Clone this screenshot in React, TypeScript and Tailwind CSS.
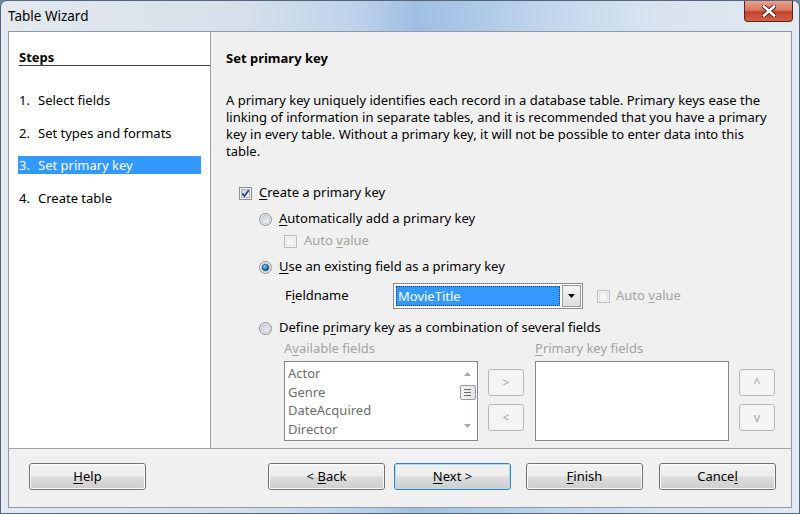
import React from "react";

function CheckBox({ checked = false, disabled = false }: { checked?: boolean; disabled?: boolean }) {
  return (
    <svg width="13" height="13" viewBox="0 0 13 13" className="shrink-0">
      <defs>
        <linearGradient id="cbin" x1="0" y1="0" x2="1" y2="1">
          <stop offset="0" stopColor="#c9ced6" />
          <stop offset="1" stopColor="#f8f8f8" />
        </linearGradient>
      </defs>
      {disabled ? (
        <>
          <rect x="0.5" y="0.5" width="12" height="12" fill="#f6f6f6" stroke="#bcbcbc" />
          <rect x="2.5" y="2.5" width="8" height="8" fill="#f4f4f4" stroke="#e2e2e2" />
        </>
      ) : (
        <>
          <rect x="0.5" y="0.5" width="12" height="12" fill="#f4f4f4" stroke="#8e8f8f" />
          <rect x="2.5" y="2.5" width="8" height="8" fill="url(#cbin)" stroke="#b2b6bc" />
        </>
      )}
      {checked && <path d="M3.2 6.4 L5.4 9 L9.8 3.2" stroke="#2c4a86" strokeWidth="1.8" fill="none" />}
    </svg>
  );
}

function Radio({ checked = false }: { checked?: boolean }) {
  return (
    <svg width="13" height="13" viewBox="0 0 13 13" className="shrink-0">
      <defs>
        <linearGradient id="rbout" x1="0" y1="0" x2="1" y2="1">
          <stop offset="0" stopColor="#f4f4f4" />
          <stop offset="1" stopColor="#e0e0e0" />
        </linearGradient>
        <linearGradient id="rbin" x1="0" y1="0" x2="1" y2="1">
          <stop offset="0" stopColor="#c6cbd2" />
          <stop offset="1" stopColor="#f6f6f6" />
        </linearGradient>
        <radialGradient id="rdot" cx="0.4" cy="0.35" r="0.7">
          <stop offset="0" stopColor="#8fdcff" />
          <stop offset="0.45" stopColor="#2a8cc4" />
          <stop offset="1" stopColor="#0c3b60" />
        </radialGradient>
      </defs>
      <circle cx="6.5" cy="6.5" r="6" fill="url(#rbout)" stroke="#8e8f8f" />
      <circle cx="6.5" cy="6.5" r="4.2" fill="url(#rbin)" stroke="#c2c6cc" strokeWidth="0.8" />
      {checked && <circle cx="6.5" cy="6.5" r="3.3" fill="url(#rdot)" stroke="#1d4a6e" strokeWidth="0.6" />}
    </svg>
  );
}

function U({ children }: { children: React.ReactNode }) {
  return <span className="underline underline-offset-[2px] decoration-1">{children}</span>;
}

function Btn({ children, def = false }: { children: React.ReactNode; def?: boolean }) {
  return (
    <div
      className={`w-[117px] h-[27px] rounded-[3px] border ${
        def ? "border-[#3c7fb1]" : "border-[#707070]"
      } shrink-0`}
    >
      <div
        className={`h-full w-full rounded-[2px] border ${
          def ? "border-[#a9dcf5]" : "border-[#fbfbfb]"
        } bg-[linear-gradient(#f3f3f3_0%,#ebebeb_48%,#dddddd_52%,#cfcfcf_100%)] flex items-center justify-center text-black`}
      >
        {children}
      </div>
    </div>
  );
}

function SmallBtn({ children }: { children: React.ReactNode }) {
  return (
    <div className="w-[36px] h-[27px] rounded-[3px] border border-[#b5b8bb] bg-[#f4f4f4] flex items-center justify-center text-[#a3a3a3] text-[12px]">
      {children}
    </div>
  );
}

export default function App() {
  return (
    <div className="w-[800px] h-[514px] overflow-hidden bg-[#6f8aa6] font-['Noto_Sans',sans-serif] text-[13px] text-black">
      <div className="w-[800px] h-[514px] rounded-t-[7px] border border-[#53657a] bg-[linear-gradient(90deg,#e3e9ef_0%,#d6e0ea_30%,#bcd2ea_45%,#9fbfe2_52%,#aac7e6_58%,#c4d8ec_70%,#d8e3ef_82%,#e2e9f0_100%)] flex flex-col">
        {/* Title bar */}
        <div className="h-[30px] flex items-start justify-between">
          <div className="pl-[7px] pt-[6px] leading-[18px] text-[13.5px] text-black">Table Wizard</div>
          <div className="mr-[6px] w-[49px] h-[21px] rounded-b-[4px] border border-t-0 border-[#5e2219] bg-[linear-gradient(#e8a392_0%,#d5765f_45%,#c2432a_55%,#d1614a_100%)] flex items-center justify-center">
            <svg width="14" height="12" viewBox="0 0 14 12">
              <path d="M2 1.5 L12 10.5 M12 1.5 L2 10.5" stroke="#4b1a12" strokeWidth="4.4" strokeLinecap="square" />
              <path d="M2 1.5 L12 10.5 M12 1.5 L2 10.5" stroke="#ffffff" strokeWidth="2.6" strokeLinecap="square" />
            </svg>
          </div>
        </div>

        {/* Client area */}
        <div className="ml-[7px] w-[784px] h-[477px] border border-[#8e9aa8] bg-[#f0f0f0] flex flex-col">
          <div className="h-[416px] flex">
            {/* Left steps panel */}
            <div className="w-[202px] h-full bg-white border-r border-[#a0a0a0] pt-[17px]">
              <div className="ml-[10px] font-bold leading-[16px] h-[16px] border-b border-[#3a3a3a] box-content">Steps</div>
              <div className="mt-[25px] ml-[9px] flex flex-col gap-[14.5px]">
                {["Select fields", "Set types and formats", "Set primary key", "Create table"].map((s, i) => (
                  <div
                    key={s}
                    className={`w-[183px] h-[18px] leading-[18px] flex pl-[1px] ${
                      i === 2 ? "bg-[#3399ff] text-white" : "text-black"
                    }`}
                  >
                    <span className="w-[19px]">{i + 1}.</span>
                    <span>{s}</span>
                  </div>
                ))}
              </div>
            </div>

            {/* Right content panel */}
            <div className="flex-1 h-full pl-[15px] pt-[18px] overflow-hidden">
              <div className="font-bold leading-[16px] h-[16px]">Set primary key</div>
              <div className="mt-[26px] leading-[17px] whitespace-nowrap">
                <div>A primary key uniquely identifies each record in a database table. Primary keys ease the</div>
                <div>linking of information in separate tables, and it is recommended that you have a primary</div>
                <div>key in every table. Without a primary key, it will not be possible to enter data into this</div>
                <div>table.</div>
              </div>

              <div className="mt-[24px] h-[18px] ml-[13px] flex items-center gap-[7px]">
                <CheckBox checked />
                <span>
                  <U>C</U>reate a primary key
                </span>
              </div>
              <div className="mt-[8px] h-[18px] ml-[33px] flex items-center gap-[7px]">
                <Radio />
                <span>
                  <U>A</U>utomatically add a primary key
                </span>
              </div>
              <div className="mt-[4px] h-[18px] ml-[58px] flex items-center gap-[7px] text-[#a3a3a3]">
                <CheckBox disabled />
                <span>
                  Auto <U>v</U>alue
                </span>
              </div>
              <div className="mt-[8px] h-[18px] ml-[33px] flex items-center gap-[7px]">
                <Radio checked />
                <span>
                  <U>U</U>se an existing field as a primary key
                </span>
              </div>
              <div className="mt-[7px] h-[26px] ml-[59px] flex items-center">
                <span className="w-[108px]">
                  F<U>i</U>eldname
                </span>
                <div className="w-[190px] h-[26px] border border-[#8c8c8c] bg-white p-px flex">
                  <div className="flex-1 m-px bg-[#3399ff] outline-1 outline-dotted outline-[#1a3f6e] -outline-offset-1 text-white leading-[20px] pl-[2px]">
                    MovieTitle
                  </div>
                  <div className="w-[19px] ml-px border border-[#9c9c9c] bg-[linear-gradient(#f6f6f6,#dcdcdc)] flex items-center justify-center">
                    <svg width="7" height="4" viewBox="0 0 7 4">
                      <path d="M0 0 L7 0 L3.5 4 Z" fill="#000" />
                    </svg>
                  </div>
                </div>
                <div className="ml-[14px] flex items-center gap-[6px] text-[#a3a3a3]">
                  <CheckBox disabled />
                  <span>
                    Auto <U>v</U>alue
                  </span>
                </div>
              </div>
              <div className="mt-[10px] h-[18px] ml-[33px] flex items-center gap-[7px]">
                <Radio />
                <span>
                  Define p<U>r</U>imary key as a combination of several fields
                </span>
              </div>
              <div className="mt-[3px] h-[18px] ml-[58px] flex items-center text-[#a3a3a3]">
                <span className="w-[251px]">
                  A<U>v</U>ailable fields
                </span>
                <span>
                  <U>P</U>rimary key fields
                </span>
              </div>
              <div className="mt-[3px] ml-[58px] flex items-start">
                <div className="w-[194px] h-[80px] border border-[#828790] bg-white flex">
                  <div className="flex-1 pl-[3px] pt-[2px] leading-[18.5px] text-[#6d6d6d]">
                    <div>Actor</div>
                    <div>Genre</div>
                    <div>DateAcquired</div>
                    <div>Director</div>
                  </div>
                  <div className="w-[19px] flex flex-col items-center">
                    <svg width="7" height="4" viewBox="0 0 7 4" className="mt-[10px]">
                      <path d="M0 4 L7 4 L3.5 0 Z" fill="#a8a8a8" />
                    </svg>
                    <div className="mt-[9px] w-[16px] h-[15px] rounded-[2px] border border-[#9a9a9a] bg-[linear-gradient(90deg,#f4f4f4,#e2e2e2)] flex flex-col items-center justify-center gap-[2px]">
                      <div className="w-[7px] h-px bg-[#6a6a6a]" />
                      <div className="w-[7px] h-px bg-[#6a6a6a]" />
                      <div className="w-[7px] h-px bg-[#6a6a6a]" />
                    </div>
                    <svg width="7" height="4" viewBox="0 0 7 4" className="mt-[24px]">
                      <path d="M0 0 L7 0 L3.5 4 Z" fill="#a8a8a8" />
                    </svg>
                  </div>
                </div>
                <div className="ml-[10px] mt-[8px] flex flex-col gap-[8px]">
                  <SmallBtn>&gt;</SmallBtn>
                  <SmallBtn>&lt;</SmallBtn>
                </div>
                <div className="ml-[11px] w-[194px] h-[80px] border border-[#828790] bg-white" />
                <div className="ml-[10px] mt-[8px] flex flex-col gap-[8px]">
                  <SmallBtn>^</SmallBtn>
                  <SmallBtn>v</SmallBtn>
                </div>
              </div>
            </div>
          </div>

          {/* Bottom buttons */}
          <div className="flex-1 border-t border-[#a0a0a0] flex items-start pt-[14px]">
            <div className="ml-[20px]">
              <Btn>
                <span>
                  <U>H</U>elp
                </span>
              </Btn>
            </div>
            <div className="flex-1" />
            <Btn>
              <span>
                &lt; <U>B</U>ack
              </span>
            </Btn>
            <div className="ml-[9px]">
              <Btn def>
                <span>
                  <U>N</U>ext &gt;
                </span>
              </Btn>
            </div>
            <div className="ml-[15px]">
              <Btn>
                <span>
                  <U>F</U>inish
                </span>
              </Btn>
            </div>
            <div className="ml-[16px] mr-[15px]">
              <Btn>
                <span>
                  Cance<U>l</U>
                </span>
              </Btn>
            </div>
          </div>
        </div>
      </div>
    </div>
  );
}
